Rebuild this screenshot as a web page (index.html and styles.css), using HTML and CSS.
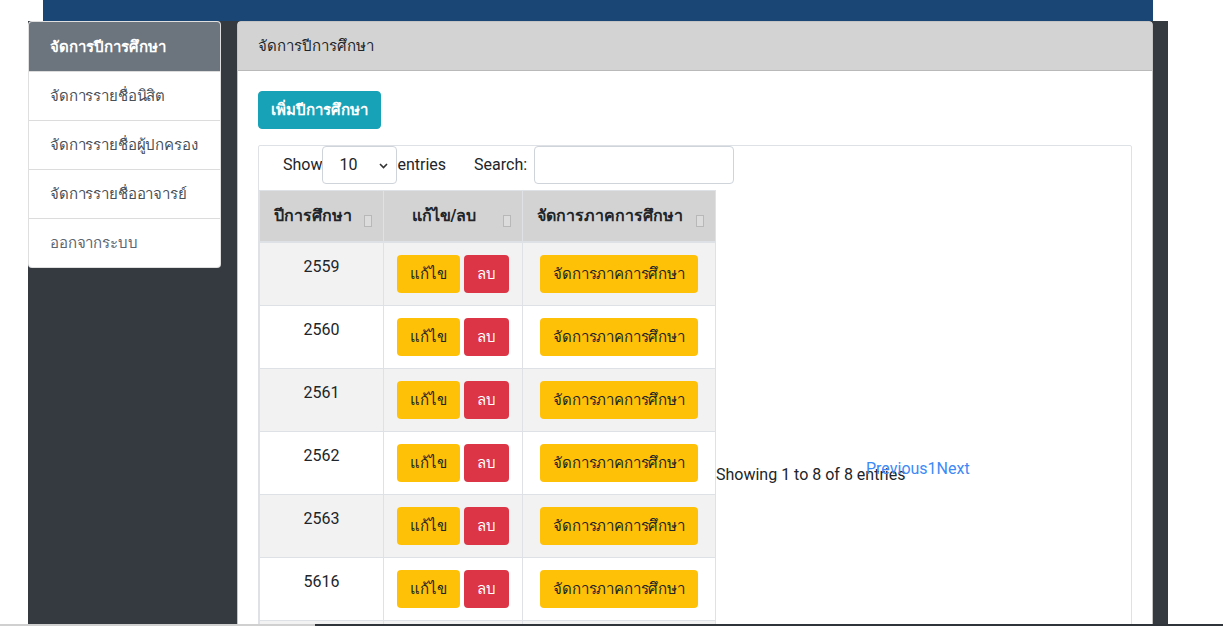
FILE: index.html
```html
<!DOCTYPE html>
<html lang="th">
<head>
<meta charset="utf-8">
<title>จัดการปีการศึกษา</title>
<link rel="stylesheet" href="styles.css">
</head>
<body>
<div class="topbar"></div>
<div class="shell">
  <aside class="side">
    <nav class="menu">
      <a class="item active">จัดการปีการศึกษา</a>
      <a class="item">จัดการรายชื่อนิสิต</a>
      <a class="item">จัดการรายชื่อผู้ปกครอง</a>
      <a class="item">จัดการรายชื่ออาจารย์</a>
      <a class="item muted">ออกจากระบบ</a>
    </nav>
  </aside>
  <main class="main">
    <section class="card">
      <div class="card-head">จัดการปีการศึกษา</div>
      <div class="card-body">
        <button class="btn btn-info">เพิ่มปีการศึกษา</button>
        <div class="dt">
          <div class="dt-top">
            <label class="dt-len">Show <span class="select">10<svg class="chev" width="9" height="6" viewBox="0 0 9 6"><path d="M1 1l3.5 3.5L8 1" fill="none" stroke="#333" stroke-width="1.6"/></svg></span>entries</label>
            <label class="dt-search">Search: <span class="input"></span></label>
          </div>
          <div class="dt-row">
            <table class="tbl">
              <colgroup><col class="w1"><col class="w2"><col class="w3"></colgroup>
              <thead>
                <tr>
                  <th>ปีการศึกษา<span class="sort"></span></th>
                  <th>แก้ไข/ลบ<span class="sort"></span></th>
                  <th>จัดการภาคการศึกษา<span class="sort"></span></th>
                </tr>
              </thead>
              <tbody>
                <tr><td>2559</td><td><span class="btn btn-warn">แก้ไข</span><span class="btn btn-danger">ลบ</span></td><td><span class="btn btn-warn">จัดการภาคการศึกษา</span></td></tr>
                <tr><td>2560</td><td><span class="btn btn-warn">แก้ไข</span><span class="btn btn-danger">ลบ</span></td><td><span class="btn btn-warn">จัดการภาคการศึกษา</span></td></tr>
                <tr><td>2561</td><td><span class="btn btn-warn">แก้ไข</span><span class="btn btn-danger">ลบ</span></td><td><span class="btn btn-warn">จัดการภาคการศึกษา</span></td></tr>
                <tr><td>2562</td><td><span class="btn btn-warn">แก้ไข</span><span class="btn btn-danger">ลบ</span></td><td><span class="btn btn-warn">จัดการภาคการศึกษา</span></td></tr>
                <tr><td>2563</td><td><span class="btn btn-warn">แก้ไข</span><span class="btn btn-danger">ลบ</span></td><td><span class="btn btn-warn">จัดการภาคการศึกษา</span></td></tr>
                <tr><td>5616</td><td><span class="btn btn-warn">แก้ไข</span><span class="btn btn-danger">ลบ</span></td><td><span class="btn btn-warn">จัดการภาคการศึกษา</span></td></tr>
                <tr><td>5617</td><td><span class="btn btn-warn">แก้ไข</span><span class="btn btn-danger">ลบ</span></td><td><span class="btn btn-warn">จัดการภาคการศึกษา</span></td></tr>
                <tr><td>5618</td><td><span class="btn btn-warn">แก้ไข</span><span class="btn btn-danger">ลบ</span></td><td><span class="btn btn-warn">จัดการภาคการศึกษา</span></td></tr>
              </tbody>
            </table>
            <div class="dt-info">Showing 1 to 8 of 8 entries</div>
            <div class="dt-pages"><a>Previous</a><a>1</a><a>Next</a></div>
          </div>
        </div>
      </div>
    </section>
  </main>
</div>
<div class="bottombar"><span class="bb-left"></span><span class="bb-right"></span></div>
</body>
</html>
```

FILE: styles.css
```css
* { box-sizing: border-box; }
html, body { margin: 0; padding: 0; }
body {
  background: #fff;
  color: #212529;
  font-family: "Segoe UI", Roboto, "Noto Sans", "Liberation Sans", sans-serif;
  font-size: 16px;
  line-height: 24px;
  overflow: hidden;
  height: 626px;
}

.topbar {
  margin-left: 43px;
  width: 1110px;
  height: 21px;
  background: #1a4676;
}

.shell {
  margin-left: 28px;
  width: 1140px;
  min-height: 640px;
  background: #343a40;
  display: flex;
  align-items: flex-start;
  padding-right: 15px;
}

.side {
  width: 193px;
  flex: none;
}

.menu {
  display: flex;
  flex-direction: column;
  background: #fff;
  border: 1px solid rgba(0,0,0,.125);
  border-radius: 4px;
  overflow: hidden;
}

.item {
  display: block;
  padding: 12px 10px 12px 21px;
  color: #495057;
  border-top: 1px solid #dcdcdc;
  text-decoration: none;
  white-space: nowrap;
  font-size: 15px;
  letter-spacing: -0.15px;
}
.item:first-child { border-top: 0; padding-top: 13px; }
.item.active {
  background: #6c757d;
  color: #fff;
  font-weight: 600;
  letter-spacing: 0;
}
.item.muted { color: #5d6570; }

.main {
  margin-left: 16px;
  width: 916px;
  flex: none;
}

.card {
  background: #fff;
  border: 1px solid #c4c4c4;
  border-radius: 4px 4px 0 0;
  min-height: 620px;
}

.card-head {
  background: #d3d3d3;
  padding: 12px 20px;
  border-bottom: 1px solid #b9b9b9;
  color: #212529;
  font-size: 15px;
}

.card-body {
  padding: 20px;
}

.btn {
  display: inline-block;
  border: 1px solid transparent;
  border-radius: 4px;
  padding: 6px 12px;
  font-family: inherit;
  font-size: 15px;
  line-height: 24px;
  letter-spacing: -0.15px;
  vertical-align: middle;
}
.btn-info {
  background: #17a2b8;
  color: #fff;
  font-weight: 600;
  letter-spacing: 0;
  border-color: #17a2b8;
}
.btn-warn {
  background: #ffc107;
  color: #212529;
}
.btn-danger {
  background: #dc3545;
  color: #fff;
  margin-left: 4px;
}

.dt {
  margin-top: 16px;
  border: 1px solid #dee2e6;
  border-radius: 2px;
}

.dt-top {
  display: flex;
  align-items: center;
  height: 38px;
  padding-left: 24px;
}
.dt-len, .dt-search {
  display: flex;
  align-items: center;
  color: #212529;
}
.select {
  display: inline-flex;
  align-items: center;
  justify-content: space-between;
  width: 75px;
  height: 38px;
  border: 1px solid #ced4da;
  border-radius: 4px;
  padding: 0 8px 0 16px;
}
.chev { margin-top: 1px; }
.dt-search { margin-left: 28px; gap: 7px; }
.input {
  display: inline-block;
  width: 200px;
  height: 38px;
  border: 1px solid #ced4da;
  border-radius: 4px;
}

.dt-row {
  display: flex;
  align-items: center;
  margin-top: 6px;
}

.tbl {
  border-collapse: collapse;
  table-layout: fixed;
  width: 456px;
  flex: none;
  text-align: center;
}
.w1 { width: 124px; }
.w2 { width: 139px; }
.w3 { width: 193px; }
.tbl th, .tbl td {
  border: 1px solid #dee2e6;
}
.tbl th {
  position: relative;
  background: #d3d3d3;
  padding: 13px 30px 13px 12px;
  font-weight: 700;
  white-space: nowrap;
  border-bottom-width: 2px;
}
.sort {
  position: absolute;
  right: 11px;
  top: 24px;
  width: 8px;
  height: 12px;
  border: 1px solid #b8b8b8;
  background: #dcdcdc;
}
.tbl td {
  padding: 12px;
  vertical-align: top;
  white-space: nowrap;
}
.tbl tbody tr:nth-child(odd) td { background: #f2f2f2; }

.dt-info {
  width: 150px;
  white-space: nowrap;
  margin-top: 12px;
}
.dt-pages {
  display: flex;
  color: #3d8af7;
}
.dt-pages a { color: #3d8af7; }

.bottombar {
  position: fixed;
  left: 0;
  right: 0;
  bottom: 0;
  height: 2px;
  display: flex;
}
.bb-left { width: 315px; background: #d0d0d0; }
.bb-right { flex: 1; background: #2e343a; }
```
